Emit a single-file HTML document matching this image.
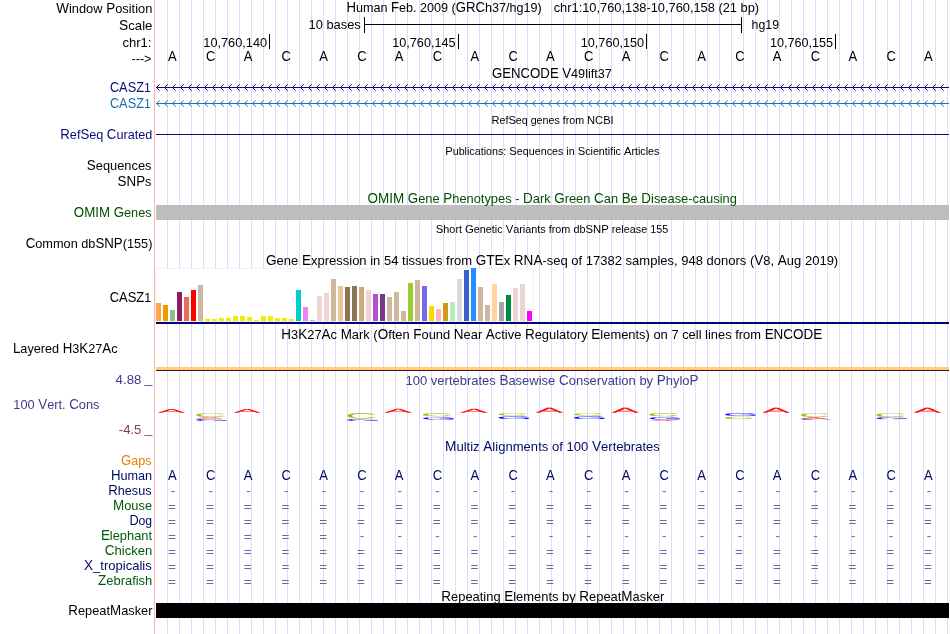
<!DOCTYPE html>
<html><head><meta charset="utf-8"><title>UCSC Genome Browser chr1:10,760,138-10,760,158</title><style>
html,body{margin:0;padding:0;background:#fff;}
body{width:950px;height:634px;overflow:hidden;position:relative;}
#wrap{position:absolute;left:0;top:0;width:950px;height:634px;will-change:transform;background:#fff;}
svg{position:absolute;left:0;top:0;}
text{font-family:"Liberation Sans",sans-serif;font-size:13.5px;white-space:pre;}
text.s{font-size:11.2px;}
tspan.c{font-size:14.1px;}
tspan.sc{font-size:11.7px;}
</style></head><body><div id="wrap">
<svg width="950" height="634" viewBox="0 0 950 634">
<g shape-rendering="crispEdges">
<rect x="154" y="0" width="1" height="634" fill="#ffb4b4"/>
<path d="M167.5 0V634M179.5 0V634M191.5 0V634M203.5 0V634M215.5 0V634M227.5 0V634M239.5 0V634M251.5 0V634M263.5 0V634M275.5 0V634M287.5 0V634M299.5 0V634M311.5 0V634M323.5 0V634M335.5 0V634M347.5 0V634M359.5 0V634M371.5 0V634M383.5 0V634M395.5 0V634M407.5 0V634M419.5 0V634M431.5 0V634M443.5 0V634M455.5 0V634M467.5 0V634M479.5 0V634M491.5 0V634M503.5 0V634M515.5 0V634M527.5 0V634M539.5 0V634M551.5 0V634M563.5 0V634M575.5 0V634M587.5 0V634M599.5 0V634M611.5 0V634M623.5 0V634M635.5 0V634M647.5 0V634M659.5 0V634M671.5 0V634M683.5 0V634M695.5 0V634M707.5 0V634M719.5 0V634M731.5 0V634M743.5 0V634M755.5 0V634M767.5 0V634M779.5 0V634M791.5 0V634M803.5 0V634M815.5 0V634M827.5 0V634M839.5 0V634M851.5 0V634M863.5 0V634M875.5 0V634M887.5 0V634M899.5 0V634M911.5 0V634M923.5 0V634M935.5 0V634M947.5 0V634" stroke="#dcdcff" stroke-width="1" fill="none"/>
</g>
<g shape-rendering="crispEdges">
<path d="M364 24.5H742M364.5 17V33M741.5 17V33" stroke="#000" fill="none"/>
<path d="M269.5 34V49M458.5 34V49M646.5 34V49M835.5 34V49" stroke="#000" fill="none"/>
<rect x="156" y="87" width="793" height="1" fill="#0c0c78"/>
<rect x="156" y="103" width="793" height="1" fill="#1871b0"/>
<rect x="156" y="134" width="793" height="1" fill="#0c0c78"/>
<rect x="156" y="205" width="793" height="15" fill="#bebebe"/>
<rect x="155" y="268" width="379" height="54" fill="#f1f1f1"/><rect x="156" y="269" width="377" height="52" fill="#fff"/>
<rect x="156" y="303" width="5" height="18" fill="#FFA54F"/>
<rect x="163" y="305" width="5" height="16" fill="#EE9A00"/>
<rect x="170" y="310" width="5" height="11" fill="#8FBC8F"/>
<rect x="177" y="292" width="5" height="29" fill="#8B1C62"/>
<rect x="184" y="297" width="5" height="24" fill="#EE6A50"/>
<rect x="191" y="290" width="5" height="31" fill="#FF0000"/>
<rect x="198" y="285" width="5" height="36" fill="#CDB79E"/>
<rect x="205" y="319" width="5" height="2" fill="#EEEE00"/>
<rect x="212" y="319" width="5" height="2" fill="#EEEE00"/>
<rect x="219" y="318" width="5" height="3" fill="#EEEE00"/>
<rect x="226" y="318" width="5" height="3" fill="#EEEE00"/>
<rect x="233" y="316" width="5" height="5" fill="#EEEE00"/>
<rect x="240" y="316" width="5" height="5" fill="#EEEE00"/>
<rect x="247" y="317" width="5" height="4" fill="#EEEE00"/>
<rect x="254" y="320" width="5" height="1" fill="#EEEE00"/>
<rect x="261" y="316" width="5" height="5" fill="#EEEE00"/>
<rect x="268" y="316" width="5" height="5" fill="#EEEE00"/>
<rect x="275" y="318" width="5" height="3" fill="#EEEE00"/>
<rect x="282" y="318" width="5" height="3" fill="#EEEE00"/>
<rect x="289" y="319" width="5" height="2" fill="#EEEE00"/>
<rect x="296" y="290" width="5" height="31" fill="#00CDCD"/>
<rect x="303" y="307" width="5" height="14" fill="#EE82EE"/>
<rect x="310" y="320" width="5" height="1" fill="#9AC0CD"/>
<rect x="317" y="296" width="5" height="25" fill="#EED5D2"/>
<rect x="324" y="293" width="5" height="28" fill="#EED5D2"/>
<rect x="331" y="279" width="5" height="42" fill="#CDB79E"/>
<rect x="338" y="286" width="5" height="35" fill="#EEC591"/>
<rect x="345" y="287" width="5" height="34" fill="#8B7355"/>
<rect x="352" y="286" width="5" height="35" fill="#8B7355"/>
<rect x="359" y="287" width="5" height="34" fill="#CDAA7D"/>
<rect x="366" y="290" width="5" height="31" fill="#EED5D2"/>
<rect x="373" y="294" width="5" height="27" fill="#B452CD"/>
<rect x="380" y="294" width="5" height="27" fill="#7A378B"/>
<rect x="387" y="297" width="5" height="24" fill="#CDB79E"/>
<rect x="394" y="292" width="5" height="29" fill="#CDB79E"/>
<rect x="401" y="311" width="5" height="10" fill="#CDB79E"/>
<rect x="408" y="283" width="5" height="38" fill="#9ACD32"/>
<rect x="415" y="280" width="5" height="41" fill="#CDB79E"/>
<rect x="422" y="286" width="5" height="35" fill="#7A67EE"/>
<rect x="429" y="306" width="5" height="15" fill="#FFD700"/>
<rect x="436" y="309" width="5" height="12" fill="#FFB6C1"/>
<rect x="443" y="303" width="5" height="18" fill="#CD9B1D"/>
<rect x="450" y="302" width="5" height="19" fill="#B4EEB4"/>
<rect x="457" y="279" width="5" height="42" fill="#D9D9D9"/>
<rect x="464" y="270" width="5" height="51" fill="#3A5FCD"/>
<rect x="471" y="268" width="5" height="53" fill="#1E90FF"/>
<rect x="478" y="287" width="5" height="34" fill="#CDB79E"/>
<rect x="485" y="305" width="5" height="16" fill="#CDB79E"/>
<rect x="492" y="284" width="5" height="37" fill="#FFD39B"/>
<rect x="499" y="302" width="5" height="19" fill="#A6A6A6"/>
<rect x="506" y="295" width="5" height="26" fill="#008B45"/>
<rect x="513" y="288" width="5" height="33" fill="#EED5D2"/>
<rect x="520" y="284" width="5" height="37" fill="#EED5D2"/>
<rect x="527" y="311" width="5" height="10" fill="#FF00FF"/>
<rect x="156" y="322" width="793" height="2" fill="#00007f"/>
<rect x="156" y="367" width="793" height="3" fill="#ffd073"/>
<rect x="156" y="370" width="793" height="1" fill="#3a0a3a"/>
<rect x="156" y="603" width="793" height="15" fill="#000"/>
</g>
<pattern id="cv1" x="157" y="84" width="8" height="7" patternUnits="userSpaceOnUse"><path d="M0 2h1v1h-1zM0 4h1v1h-1zM1 1h1v1h-1zM1 5h1v1h-1z" fill="#0c0c78" shape-rendering="crispEdges"/><path d="M2 0h1v1h-1zM2 6h1v1h-1z" fill="#0c0c78" fill-opacity="0.6" shape-rendering="crispEdges"/></pattern>
<rect x="157" y="84" width="792" height="7" fill="url(#cv1)" shape-rendering="crispEdges"/>
<pattern id="cv2" x="157" y="100" width="8" height="7" patternUnits="userSpaceOnUse"><path d="M0 2h1v1h-1zM0 4h1v1h-1zM1 1h1v1h-1zM1 5h1v1h-1z" fill="#1871b0" shape-rendering="crispEdges"/><path d="M2 0h1v1h-1zM2 6h1v1h-1z" fill="#1871b0" fill-opacity="0.6" shape-rendering="crispEdges"/></pattern>
<rect x="157" y="100" width="792" height="7" fill="url(#cv2)" shape-rendering="crispEdges"/>
<text transform="translate(157.65 412.85) rotate(0.1) scale(0.4184 0.0538)" style="font-size:100px" text-rendering="geometricPrecision" fill="#ff0000" stroke="#ff0000" stroke-width="0.5" vector-effect="non-scaling-stroke" x="-0.2" y="0">A</text>
<text transform="translate(233.25 412.85) rotate(0.1) scale(0.4184 0.0538)" style="font-size:100px" text-rendering="geometricPrecision" fill="#ff0000" stroke="#ff0000" stroke-width="0.5" vector-effect="non-scaling-stroke" x="-0.2" y="0">A</text>
<text transform="translate(384.45 412.85) rotate(0.1) scale(0.4184 0.0581)" style="font-size:100px" text-rendering="geometricPrecision" fill="#ff0000" stroke="#ff0000" stroke-width="0.5" vector-effect="non-scaling-stroke" x="-0.2" y="0">A</text>
<text transform="translate(460.05 412.85) rotate(0.1) scale(0.4184 0.0581)" style="font-size:100px" text-rendering="geometricPrecision" fill="#ff0000" stroke="#ff0000" stroke-width="0.5" vector-effect="non-scaling-stroke" x="-0.2" y="0">A</text>
<text transform="translate(535.65 412.85) rotate(0.1) scale(0.4184 0.0712)" style="font-size:100px" text-rendering="geometricPrecision" fill="#ff0000" stroke="#ff0000" stroke-width="0.5" vector-effect="non-scaling-stroke" x="-0.2" y="0">A</text>
<text transform="translate(611.25 412.85) rotate(0.1) scale(0.4184 0.0712)" style="font-size:100px" text-rendering="geometricPrecision" fill="#ff0000" stroke="#ff0000" stroke-width="0.5" vector-effect="non-scaling-stroke" x="-0.2" y="0">A</text>
<text transform="translate(762.45 412.85) rotate(0.1) scale(0.4184 0.0712)" style="font-size:100px" text-rendering="geometricPrecision" fill="#ff0000" stroke="#ff0000" stroke-width="0.5" vector-effect="non-scaling-stroke" x="-0.2" y="0">A</text>
<text transform="translate(913.65 412.85) rotate(0.1) scale(0.4184 0.0712)" style="font-size:100px" text-rendering="geometricPrecision" fill="#ff0000" stroke="#ff0000" stroke-width="0.5" vector-effect="non-scaling-stroke" x="-0.2" y="0">A</text>
<text transform="translate(196.35 416.65) rotate(0.1) scale(0.4430 0.0516)" style="font-size:100px" text-rendering="geometricPrecision" fill="#b4b400" stroke="#b4b400" stroke-width="0.5" vector-effect="non-scaling-stroke" x="-5.1" y="0">C</text>
<text transform="translate(195.55 418.55) rotate(0.1) scale(0.4154 0.0189)" style="font-size:100px" text-rendering="geometricPrecision" fill="#ff0000" stroke="#ff0000" stroke-width="0.5" vector-effect="non-scaling-stroke" x="-0.2" y="0">A</text>
<text transform="translate(196.35 420.73) rotate(0.1) scale(0.4647 0.0240)" style="font-size:100px" text-rendering="geometricPrecision" fill="#0000ff" stroke="#0000ff" stroke-width="0.5" vector-effect="non-scaling-stroke" x="-5.0" y="0">G</text>
<text transform="translate(347.43 418.53) rotate(0.1) scale(0.4430 0.0785)" style="font-size:100px" text-rendering="geometricPrecision" fill="#b4b400" stroke="#b4b400" stroke-width="0.5" vector-effect="non-scaling-stroke" x="-5.1" y="0">C</text>
<text transform="translate(347.43 420.78) rotate(0.1) scale(0.4647 0.0240)" style="font-size:100px" text-rendering="geometricPrecision" fill="#0000ff" stroke="#0000ff" stroke-width="0.5" vector-effect="non-scaling-stroke" x="-5.0" y="0">G</text>
<text transform="translate(422.97 416.31) rotate(0.1) scale(0.4430 0.0467)" style="font-size:100px" text-rendering="geometricPrecision" fill="#b4b400" stroke="#b4b400" stroke-width="0.5" vector-effect="non-scaling-stroke" x="-5.1" y="0">C</text>
<text transform="translate(422.97 419.62) rotate(0.1) scale(0.4647 0.0354)" style="font-size:100px" text-rendering="geometricPrecision" fill="#0000ff" stroke="#0000ff" stroke-width="0.5" vector-effect="non-scaling-stroke" x="-5.0" y="0">G</text>
<text transform="translate(498.51 415.42) rotate(0.1) scale(0.4430 0.0339)" style="font-size:100px" text-rendering="geometricPrecision" fill="#b4b400" stroke="#b4b400" stroke-width="0.5" vector-effect="non-scaling-stroke" x="-5.1" y="0">C</text>
<text transform="translate(498.51 418.92) rotate(0.1) scale(0.4647 0.0382)" style="font-size:100px" text-rendering="geometricPrecision" fill="#0000ff" stroke="#0000ff" stroke-width="0.5" vector-effect="non-scaling-stroke" x="-5.0" y="0">G</text>
<text transform="translate(574.05 415.42) rotate(0.1) scale(0.4430 0.0339)" style="font-size:100px" text-rendering="geometricPrecision" fill="#b4b400" stroke="#b4b400" stroke-width="0.5" vector-effect="non-scaling-stroke" x="-5.1" y="0">C</text>
<text transform="translate(574.05 418.92) rotate(0.1) scale(0.4647 0.0382)" style="font-size:100px" text-rendering="geometricPrecision" fill="#0000ff" stroke="#0000ff" stroke-width="0.5" vector-effect="non-scaling-stroke" x="-5.0" y="0">G</text>
<text transform="translate(649.59 416.31) rotate(0.1) scale(0.4430 0.0467)" style="font-size:100px" text-rendering="geometricPrecision" fill="#b4b400" stroke="#b4b400" stroke-width="0.5" vector-effect="non-scaling-stroke" x="-5.1" y="0">C</text>
<text transform="translate(649.59 419.52) rotate(0.1) scale(0.4647 0.0339)" style="font-size:100px" text-rendering="geometricPrecision" fill="#0000ff" stroke="#0000ff" stroke-width="0.5" vector-effect="non-scaling-stroke" x="-5.0" y="0">G</text>
<text transform="translate(648.79 420.65) rotate(0.1) scale(0.4154 0.0087)" style="font-size:100px" text-rendering="geometricPrecision" fill="#ff0000" stroke="#ff0000" stroke-width="0.5" vector-effect="non-scaling-stroke" x="-0.2" y="0">A</text>
<text transform="translate(725.13 415.72) rotate(0.1) scale(0.4647 0.0382)" style="font-size:100px" text-rendering="geometricPrecision" fill="#0000ff" stroke="#0000ff" stroke-width="0.5" vector-effect="non-scaling-stroke" x="-5.0" y="0">G</text>
<text transform="translate(725.13 418.92) rotate(0.1) scale(0.4430 0.0339)" style="font-size:100px" text-rendering="geometricPrecision" fill="#b4b400" stroke="#b4b400" stroke-width="0.5" vector-effect="non-scaling-stroke" x="-5.1" y="0">C</text>
<text transform="translate(800.67 416.65) rotate(0.1) scale(0.4430 0.0516)" style="font-size:100px" text-rendering="geometricPrecision" fill="#b4b400" stroke="#b4b400" stroke-width="0.5" vector-effect="non-scaling-stroke" x="-5.1" y="0">C</text>
<text transform="translate(799.87 418.95) rotate(0.1) scale(0.4154 0.0247)" style="font-size:100px" text-rendering="geometricPrecision" fill="#ff0000" stroke="#ff0000" stroke-width="0.5" vector-effect="non-scaling-stroke" x="-0.2" y="0">A</text>
<text transform="translate(800.67 419.84) rotate(0.1) scale(0.4647 0.0113)" style="font-size:100px" text-rendering="geometricPrecision" fill="#0000ff" stroke="#0000ff" stroke-width="0.5" vector-effect="non-scaling-stroke" x="-5.0" y="0">G</text>
<text transform="translate(876.21 416.65) rotate(0.1) scale(0.4430 0.0516)" style="font-size:100px" text-rendering="geometricPrecision" fill="#b4b400" stroke="#b4b400" stroke-width="0.5" vector-effect="non-scaling-stroke" x="-5.1" y="0">C</text>
<text transform="translate(876.21 418.93) rotate(0.1) scale(0.4647 0.0240)" style="font-size:100px" text-rendering="geometricPrecision" fill="#0000ff" stroke="#0000ff" stroke-width="0.5" vector-effect="non-scaling-stroke" x="-5.0" y="0">G</text>
<text transform="translate(875.41 419.55) rotate(0.1) scale(0.4154 0.0044)" style="font-size:100px" text-rendering="geometricPrecision" fill="#ff0000" stroke="#ff0000" stroke-width="0.5" vector-effect="non-scaling-stroke" x="-0.2" y="0">A</text>
<text x="56.20" y="13" textLength="96.20" lengthAdjust="spacingAndGlyphs"><tspan class="c">W</tspan>indow <tspan class="c">P</tspan>osition</text>
<text x="119.10" y="30" textLength="33.30" lengthAdjust="spacingAndGlyphs"><tspan class="c">S</tspan>cale</text>
<text x="122.50" y="47" textLength="29.00" lengthAdjust="spacingAndGlyphs">chr1:</text>
<text x="131.60" y="63.3" textLength="19.80" lengthAdjust="spacingAndGlyphs">---&gt;</text>
<text x="109.90" y="92" textLength="40.90" lengthAdjust="spacingAndGlyphs" fill="#0c0c78"><tspan class="c">CASZ</tspan>1</text>
<text x="109.90" y="108" textLength="40.90" lengthAdjust="spacingAndGlyphs" fill="#1871b0"><tspan class="c">CASZ</tspan>1</text>
<text x="60.30" y="139" textLength="92.00" lengthAdjust="spacingAndGlyphs" fill="#0c0c78"><tspan class="c">R</tspan>ef<tspan class="c">S</tspan>eq <tspan class="c">C</tspan>urated</text>
<text x="86.80" y="170" textLength="64.70" lengthAdjust="spacingAndGlyphs"><tspan class="c">S</tspan>equences</text>
<text x="117.60" y="186" textLength="33.90" lengthAdjust="spacingAndGlyphs"><tspan class="c">SNP</tspan>s</text>
<text x="73.80" y="217" textLength="77.90" lengthAdjust="spacingAndGlyphs" fill="#005000"><tspan class="c">OMIM</tspan> <tspan class="c">G</tspan>enes</text>
<text x="25.70" y="248" textLength="126.70" lengthAdjust="spacingAndGlyphs"><tspan class="c">C</tspan>ommon db<tspan class="c">SNP</tspan>(155)</text>
<text x="109.70" y="302" textLength="41.50" lengthAdjust="spacingAndGlyphs"><tspan class="c">CASZ</tspan>1</text>
<text x="13.00" y="353" textLength="104.50" lengthAdjust="spacingAndGlyphs"><tspan class="c">L</tspan>ayered <tspan class="c">H</tspan>3<tspan class="c">K</tspan>27<tspan class="c">A</tspan>c</text>
<text x="115.60" y="384" textLength="25.80" lengthAdjust="spacingAndGlyphs" fill="#3c3c8c">4.88</text>
<text x="144.60" y="383" textLength="7.90" lengthAdjust="spacingAndGlyphs" fill="#3c3c8c">_</text>
<text x="13.30" y="409" textLength="86.20" lengthAdjust="spacingAndGlyphs" fill="#3c3c8c">100 <tspan class="c">V</tspan>ert. <tspan class="c">C</tspan>ons</text>
<text x="118.80" y="434" textLength="22.60" lengthAdjust="spacingAndGlyphs" fill="#8c3c3c">-4.5</text>
<text x="144.60" y="433" textLength="7.90" lengthAdjust="spacingAndGlyphs" fill="#8c3c3c">_</text>
<text x="121.00" y="465" textLength="30.50" lengthAdjust="spacingAndGlyphs" fill="#e68200"><tspan class="c">G</tspan>aps</text>
<text x="110.90" y="480" textLength="41.20" lengthAdjust="spacingAndGlyphs" fill="#000a64"><tspan class="c">H</tspan>uman</text>
<text x="108.20" y="495" textLength="43.30" lengthAdjust="spacingAndGlyphs" fill="#000a64"><tspan class="c">R</tspan>hesus</text>
<text x="113.00" y="510" textLength="39.10" lengthAdjust="spacingAndGlyphs" fill="#005a0a"><tspan class="c">M</tspan>ouse</text>
<text x="129.40" y="525" textLength="22.70" lengthAdjust="spacingAndGlyphs" fill="#000a64"><tspan class="c">D</tspan>og</text>
<text x="100.90" y="540" textLength="51.10" lengthAdjust="spacingAndGlyphs" fill="#005a0a"><tspan class="c">E</tspan>lephant</text>
<text x="104.70" y="555" textLength="47.60" lengthAdjust="spacingAndGlyphs" fill="#005a0a"><tspan class="c">C</tspan>hicken</text>
<text x="84.00" y="570" textLength="67.70" lengthAdjust="spacingAndGlyphs" fill="#000a64"><tspan class="c">X</tspan>_tropicalis</text>
<text x="98.00" y="585" textLength="54.30" lengthAdjust="spacingAndGlyphs" fill="#005a0a"><tspan class="c">Z</tspan>ebrafish</text>
<text x="68.30" y="615" textLength="84.20" lengthAdjust="spacingAndGlyphs"><tspan class="c">R</tspan>epeat<tspan class="c">M</tspan>asker</text>
<text x="346.50" y="12" textLength="195.30" lengthAdjust="spacingAndGlyphs"><tspan class="c">H</tspan>uman <tspan class="c">F</tspan>eb. 2009 (<tspan class="c">GRC</tspan>h37/hg19)</text>
<text x="553.70" y="12" textLength="205.40" lengthAdjust="spacingAndGlyphs">chr1:10,760,138-10,760,158 (21 bp)</text>
<text x="308.50" y="29" textLength="52.30" lengthAdjust="spacingAndGlyphs">10 bases</text>
<text x="751.50" y="29" textLength="27.60" lengthAdjust="spacingAndGlyphs">hg19</text>
<text x="491.90" y="78" textLength="120.00" lengthAdjust="spacingAndGlyphs"><tspan class="c">GENCODE</tspan> <tspan class="c">V</tspan>49lift37</text>
<text x="491.40" y="124" textLength="122.30" lengthAdjust="spacingAndGlyphs" class="s"><tspan class="sc">R</tspan>ef<tspan class="sc">S</tspan>eq genes from <tspan class="sc">NCBI</tspan></text>
<text x="445.20" y="155" textLength="214.20" lengthAdjust="spacingAndGlyphs" class="s"><tspan class="sc">P</tspan>ublications: <tspan class="sc">S</tspan>equences in <tspan class="sc">S</tspan>cientific <tspan class="sc">A</tspan>rticles</text>
<text x="367.60" y="203" textLength="369.30" lengthAdjust="spacingAndGlyphs" fill="#005000"><tspan class="c">OMIM</tspan> <tspan class="c">G</tspan>ene <tspan class="c">P</tspan>henotypes - <tspan class="c">D</tspan>ark <tspan class="c">G</tspan>reen <tspan class="c">C</tspan>an <tspan class="c">B</tspan>e <tspan class="c">D</tspan>isease-causing</text>
<text x="435.80" y="233" textLength="232.50" lengthAdjust="spacingAndGlyphs" class="s"><tspan class="sc">S</tspan>hort <tspan class="sc">G</tspan>enetic <tspan class="sc">V</tspan>ariants from db<tspan class="sc">SNP</tspan> release 155</text>
<text x="266.00" y="265" textLength="572.20" lengthAdjust="spacingAndGlyphs"><tspan class="c">G</tspan>ene <tspan class="c">E</tspan>xpression in 54 tissues from <tspan class="c">GTE</tspan>x <tspan class="c">RNA</tspan>-seq of 17382 samples, 948 donors (<tspan class="c">V</tspan>8, <tspan class="c">A</tspan>ug 2019)</text>
<text x="281.30" y="339" textLength="541.00" lengthAdjust="spacingAndGlyphs"><tspan class="c">H</tspan>3<tspan class="c">K</tspan>27<tspan class="c">A</tspan>c <tspan class="c">M</tspan>ark (<tspan class="c">O</tspan>ften <tspan class="c">F</tspan>ound <tspan class="c">N</tspan>ear <tspan class="c">A</tspan>ctive <tspan class="c">R</tspan>egulatory <tspan class="c">E</tspan>lements) on 7 cell lines from <tspan class="c">ENCODE</tspan></text>
<text x="405.60" y="385" textLength="293.00" lengthAdjust="spacingAndGlyphs" fill="#3c3c8c">100 vertebrates <tspan class="c">B</tspan>asewise <tspan class="c">C</tspan>onservation by <tspan class="c">P</tspan>hylo<tspan class="c">P</tspan></text>
<text x="445.00" y="451" textLength="214.90" lengthAdjust="spacingAndGlyphs" fill="#000a64"><tspan class="c">M</tspan>ultiz <tspan class="c">A</tspan>lignments of 100 <tspan class="c">V</tspan>ertebrates</text>
<text x="441.30" y="601" textLength="222.90" lengthAdjust="spacingAndGlyphs"><tspan class="c">R</tspan>epeating <tspan class="c">E</tspan>lements by <tspan class="c">R</tspan>epeat<tspan class="c">M</tspan>asker</text>
<text x="203.30" y="47" textLength="63.80" lengthAdjust="spacingAndGlyphs">10,760,140</text>
<text x="392.30" y="47" textLength="63.20" lengthAdjust="spacingAndGlyphs">10,760,145</text>
<text x="580.70" y="47" textLength="63.50" lengthAdjust="spacingAndGlyphs">10,760,150</text>
<text x="769.90" y="47" textLength="63.20" lengthAdjust="spacingAndGlyphs">10,760,155</text>
<text transform="scale(0.9220 1)" style="font-size:14.1px" y="61" x="182.28 223.44 264.28 305.44 346.27 387.44 428.27 469.43 510.27 551.43 592.27 633.43 674.26 715.42 756.26 797.42 838.26 879.42 920.25 961.41 1002.25"><tspan class="c">ACACACACACACACACACACA</tspan></text>
<text transform="scale(0.9220 1)" style="font-size:14.1px" y="480" x="182.28 223.44 264.28 305.44 346.27 387.44 428.27 469.43 510.27 551.43 592.27 633.43 674.26 715.42 756.26 797.42 838.26 879.42 920.25 961.41 1002.25" fill="#000a64"><tspan class="c">ACACACACACACACACACACA</tspan></text>
<text y="495" x="170.64 208.44 246.24 284.04 321.84 359.64 397.44 435.24 473.04 510.84 548.64 586.44 624.24 662.04 699.84 737.64 775.44 813.24 851.04 888.84 926.64" fill="#6868a2">---------------------</text>
<text y="511" x="168.10 205.90 243.70 281.50 319.30 357.10 394.90 432.70 470.50 508.30 546.10 583.90 621.70 659.50 697.30 735.10 772.90 810.70 848.50 886.30 924.10" fill="#6868a2">=====================</text>
<text y="526" x="168.10 205.90 243.70 281.50 319.30 357.10 394.90 432.70 470.50 508.30 546.10 583.90 621.70 659.50 697.30 735.10 772.90 810.70 848.50 886.30 924.10" fill="#6868a2">=====================</text>
<text y="541" x="168.10 205.90 243.70 281.50 319.30" fill="#6868a2">=====</text>
<text y="540" x="359.64 397.44 435.24 473.04 510.84 548.64 586.44 624.24 662.04 699.84 737.64 775.44 813.24 851.04 888.84 926.64" fill="#6868a2">----------------</text>
<text y="556" x="168.10 205.90 243.70 281.50 319.30 357.10 394.90 432.70 470.50 508.30 546.10 583.90 621.70 659.50 697.30 735.10 772.90 810.70 848.50 886.30 924.10" fill="#6868a2">=====================</text>
<text y="571" x="168.10 205.90 243.70 281.50 319.30 357.10 394.90 432.70 470.50 508.30 546.10 583.90 621.70 659.50 697.30 735.10 772.90 810.70 848.50 886.30 924.10" fill="#6868a2">=====================</text>
<text y="586" x="168.10 205.90 243.70 281.50 319.30 357.10 394.90 432.70 470.50 508.30 546.10 583.90 621.70 659.50 697.30 735.10 772.90 810.70 848.50 886.30 924.10" fill="#6868a2">=====================</text>
</svg>
</div></body></html>
